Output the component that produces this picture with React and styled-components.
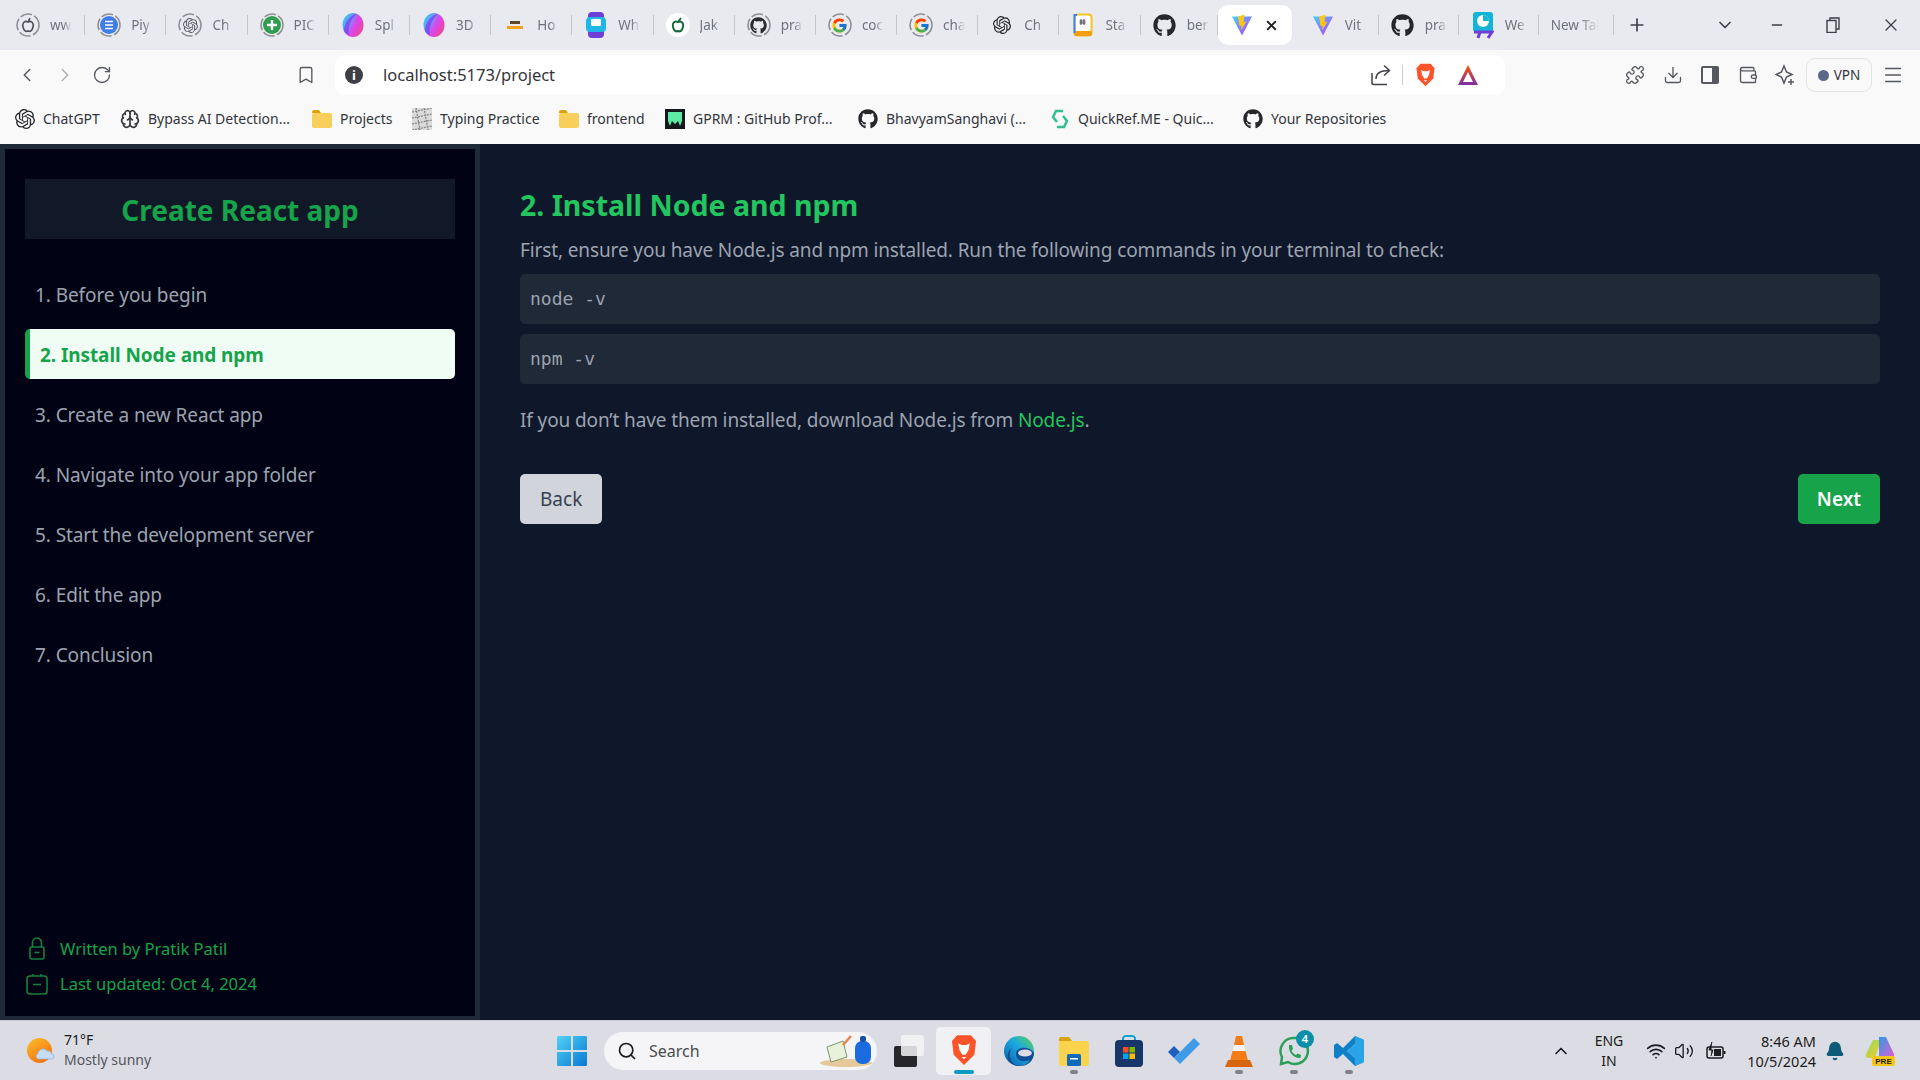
import React from 'react';
import styled, {createGlobalStyle} from 'styled-components';
import {
    ChevronLeft, ChevronRight, ChevronDown, ChevronUp, RotateCw, Bookmark, Puzzle, Download,
    Wallet, Menu, Minus, X, Plus, Search, Wifi, Volume2, Bell, Brain
} from 'lucide-react';
import {FaGithub} from 'react-icons/fa';
import {FcGoogle} from 'react-icons/fc';
import {SiOpenai} from 'react-icons/si';

const UI = '"Noto Sans", "Open Sans", sans-serif';

const Global = createGlobalStyle`
    html, body {
        margin: 0;
        height: 1080px;
        overflow: hidden;
        font-family: ${UI};
    }
    * { box-sizing: border-box; }
`

const Screen = styled.div`
    width: 1920px;
    height: 1080px;
    display: flex;
    flex-direction: column;
    background: #0f172a;
`

/* browser chrome */
const TabStrip = styled.div`
    height: 50px;
    background: #e9eaef;
    display: flex;
    align-items: center;
    padding-left: 4px;
`

const Tab = styled.div`
    width: ${props => props.$w || 81.2}px;
    margin-right: ${props => props.$active ? '7px' : '0'};
    flex: none;
    height: 40px;
    display: flex;
    align-items: center;
    gap: 10px;
    padding-left: 12px;
    position: relative;
    font-size: 13.5px;
    color: #70737b;
    overflow: hidden;
    background: ${props => props.$active ? '#fff' : 'transparent'};
    border-radius: ${props => props.$active ? '10px' : '0'};
    &::after {
        content: '';
        position: absolute;
        right: 0;
        top: 10px;
        bottom: 10px;
        width: 1px;
        background: ${props => props.$active ? 'transparent' : '#c4c6cc'};
    }
`

const TabName = styled.span`
    width: 22px;
    overflow: hidden;
    white-space: nowrap;
    -webkit-mask-image: linear-gradient(to right, #000 60%, transparent);
    mask-image: linear-gradient(to right, #000 60%, transparent);
`

const NewTabName = styled(TabName)`
    width: 48px;
`

const TabIcon = styled.span`
    width: 24px;
    height: 24px;
    flex: none;
    display: flex;
    align-items: center;
    justify-content: center;
    position: relative;
`

const Ring = styled.svg`
    position: absolute;
    inset: 0;
`

const StripTools = styled.div`
    flex: 1;
    display: flex;
    align-items: center;
    color: #3c3f46;
`

const PlusSlot = styled.div`
    margin-left: 13px;
    display: flex;
`

const WindowControls = styled.div`
    margin-left: auto;
    display: flex;
    align-items: center;
    gap: 41px;
    padding-right: 19px;
`

const ChevronSlot = styled.div`
    margin-right: -7px;
    display: flex;
`

const Restore = styled.svg`
    display: block;
`

const Toolbar = styled.div`
    height: 50px;
    background: #f9f9fa;
    display: flex;
    align-items: center;
    color: #55585f;
`

const NavTools = styled.div`
    width: 335px;
    flex: none;
    display: flex;
    align-items: center;
    padding-left: 16px;
    gap: 16px;
`

const BookmarkSlot = styled.div`
    margin-left: 168px;
    display: flex;
`

const UrlBar = styled.div`
    width: 1170px;
    flex: none;
    height: 40px;
    background: #fff;
    border-radius: 10px;
    display: flex;
    align-items: center;
    padding: 0 26px 0 10px;
`

const InfoDot = styled.span`
    width: 18px;
    height: 18px;
    border-radius: 50%;
    background: #3d3f44;
    color: #fff;
    font-size: 13px;
    font-weight: 700;
    display: flex;
    align-items: center;
    justify-content: center;
    line-height: 1;
`

const Url = styled.span`
    margin-left: 20px;
    margin-top: -2px;
    font-size: 16.5px;
    color: #33353a;
`

const UrlTools = styled.div`
    margin-left: auto;
    display: flex;
    align-items: center;
`

const ThinRule = styled.span`
    width: 1px;
    height: 20px;
    background: #c9cbd0;
    margin: 0 12px 0 10px;
`

const BatSlot = styled.span`
    margin-left: 21px;
    display: flex;
`

const ExtTools = styled.div`
    flex: 1;
    display: flex;
    align-items: center;
    padding-left: 120px;
    gap: 17.6px;
`

const VpnPill = styled.div`
    width: 66px;
    height: 34px;
    margin: 0 -8px 0 -7px;
    flex: none;
    border: 1px solid #e3e4e8;
    border-radius: 9px;
    display: flex;
    align-items: center;
    justify-content: center;
    gap: 5px;
    font-size: 13.5px;
    color: #33353a;
`

const VpnDot = styled.span`
    width: 11px;
    height: 11px;
    border-radius: 50%;
    background: #5b6788;
`

const Bookmarks = styled.div`
    height: 44px;
    background: #f9f9fa;
    display: flex;
    align-items: center;
    padding: 0 0 7px 15px;
`

const Mark = styled.div`
    width: ${props => props.$w}px;
    display: flex;
    align-items: center;
    gap: 8px;
    font-size: 14px;
    color: #33353a;
    white-space: nowrap;
`

/* page */
const Page = styled.div`
    flex: 1;
    display: flex;
    min-height: 0;
`

const Sidebar = styled.aside`
    width: 480px;
    border: 5px solid #1f2937;
    border-bottom-width: 4px;
    background: #010314;
    padding: 30px 20px 20px;
    display: flex;
    flex-direction: column;
`

const SideTitle = styled.h1`
    margin: 0 0 30px;
    height: 60px;
    background: #111827;
    color: #16a34a;
    font-size: 28px;
    font-weight: 700;
    line-height: 62px;
    text-align: center;
`

const NavList = styled.nav`
    display: flex;
    flex-direction: column;
    gap: 10px;
`

const NavItem = styled.div`
    height: 50px;
    display: flex;
    align-items: center;
    padding: 2px 0 0 10px;
    font-size: 19px;
    letter-spacing: -0.08px;
    border-radius: 5px;
    font-weight: ${props => props.$active ? 700 : 400};
    color: ${props => props.$active ? '#16a34a' : '#9ca3af'};
    background: ${props => props.$active ? '#f0fdf4' : 'transparent'};
    border-left: ${props => props.$active ? '5px solid #16a34a' : '0'};
`

const SideFooter = styled.div`
    margin-top: auto;
    display: flex;
    flex-direction: column;
    gap: 10px;
`

const FooterLine = styled.div`
    height: 25px;
    display: flex;
    align-items: center;
    gap: 11px;
    font-size: 16.5px;
    color: #16a34a;
`

const FooterIcon = styled.span`
    width: 24px;
    display: flex;
    justify-content: center;
`

const Content = styled.main`
    flex: 1;
    padding: 40px 40px 0;
    background: #0f172a;
`

const Heading = styled.h2`
    margin: 0;
    height: 42px;
    font-size: 28.5px;
    line-height: 42px;
    font-weight: 700;
    color: #22c55e;
`

const Text = styled.p`
    margin: 0;
    font-size: 19px;
    letter-spacing: -0.12px;
    line-height: 30px;
    color: #9ca3af;
`

const Lead = styled(Text)`
    margin: 9px 0 9px;
`

const Outro = styled(Text)`
    margin: 21px 0 39px;
`

const Link = styled.a`
    color: #22c55e;
`

const Code = styled.pre`
    margin: 0 0 10px;
    height: 50px;
    padding: 0 10px;
    background: #1f2937;
    border-radius: 5px;
    font-family: "DejaVu Sans Mono", "Liberation Mono", monospace;
    font-size: 18px;
    line-height: 50px;
    color: #9ca3af;
`

const Buttons = styled.div`
    display: flex;
    justify-content: space-between;
`

const Button = styled.button`
    height: 50px;
    padding: 0 ${props => props.$primary ? '19px' : '20px'};
    border: 0;
    border-radius: 5px;
    font-family: ${UI};
    font-size: 19px;
    font-weight: ${props => props.$primary ? 600 : 400};
    background: ${props => props.$primary ? '#16a34a' : '#d1d5db'};
    color: ${props => props.$primary ? '#fff' : '#374151'};
`

/* taskbar */
const Taskbar = styled.footer`
    height: 60px;
    background: #dcdce4;
    border-top: 1px solid #c9cad2;
    display: flex;
    align-items: center;
`

const Weather = styled.div`
    width: 557px;
    flex: none;
    display: flex;
    align-items: center;
    padding-left: 27px;
    gap: 9px;
`

const WeatherText = styled.div`
    font-size: 14px;
    line-height: 20px;
    margin-top: -2px;
    color: #55565c;
`

const Temp = styled.div`
    color: #1b1b1f;
`

const SearchBox = styled.div`
    width: 273px;
    height: 38px;
    flex: none;
    margin-left: 17px;
    border-radius: 19px;
    background: #f5f5f8;
    display: flex;
    align-items: center;
    padding: 0 4px 0 13px;
    gap: 12px;
    font-size: 16px;
    color: #4a4b50;
`

const SearchArt = styled.span`
    margin-left: auto;
    display: flex;
`

const TaskApps = styled.div`
    display: flex;
    align-items: center;
    flex: none;
    margin-left: 4px;
`

const AppSlot = styled.div`
    width: 55px;
    height: 48px;
    display: flex;
    align-items: center;
    justify-content: center;
    position: relative;
    border-radius: 5px;
    background: ${props => props.$active ? '#f0f0f5' : 'transparent'};
    &::after {
        content: '';
        position: absolute;
        bottom: 1px;
        left: 50%;
        transform: translateX(-50%);
        height: 4px;
        border-radius: 2px;
        width: ${props => props.$active ? '20px' : '8px'};
        background: ${props => props.$active ? '#0b9ac0' : props.$running ? '#80828a' : 'transparent'};
    }
`

const Badge = styled.span`
    position: absolute;
    top: 3px;
    right: 7px;
    width: 18px;
    height: 18px;
    border-radius: 50%;
    background: #0b8fa8;
    color: #fff;
    font-size: 11px;
    font-weight: 600;
    line-height: 18px;
    text-align: center;
`

const Tray = styled.div`
    flex: 1;
    display: flex;
    align-items: center;
    color: #1c1c20;
    font-size: 14px;
`

const TrayUp = styled.div`
    margin-left: 175px;
    display: flex;
`

const Lang = styled.div`
    width: 44px;
    margin-left: 16px;
    text-align: center;
    line-height: 20px;
`

const TrayIcons = styled.div`
    margin-left: 15px;
    display: flex;
    align-items: center;
    gap: 8px;
`

const BatteryBox = styled.span`
    margin-left: 4px;
    display: flex;
`

const Clock = styled.div`
    width: 90px;
    text-align: right;
    line-height: 20px;
    font-size: 14.5px;
`

const BellSlot = styled.div`
    margin-left: 9px;
    display: flex;
    color: #0e5b78;
`

const CopilotSlot = styled.div`
    margin-left: 20px;
    display: flex;
`

/* drawings */
function Dashed() {
    return (
        <Ring width="24" height="24" viewBox="0 0 24 24">
            <circle cx="12" cy="12" r="11" fill="none" stroke="#8e9096" strokeWidth="1.6" strokeDasharray="12 2.5"/>
        </Ring>
    )
}

function Vite({size = 24}) {
    return (
        <svg width={size} height={size} viewBox="0 0 24 24">
            <defs>
                <linearGradient id="viteBody" x1="0" y1="0" x2="1" y2="1">
                    <stop offset="0" stopColor="#41d1ff"/>
                    <stop offset="1" stopColor="#bd34fe"/>
                </linearGradient>
            </defs>
            <path d="M2 3.5 L22 3.5 L12 22.5 Z" fill="url(#viteBody)"/>
            <path d="M14.5 1.5 L8 3.8 L9.5 13 L11.5 12.5 L11 17.5 L16.5 8.5 L13.5 9 Z" fill="#ffc517"/>
        </svg>
    )
}

function Brave({size = 24}) {
    return (
        <svg width={size} height={size * 1.15} viewBox="0 0 24 28">
            <path d="M6 1 H18 L22.5 6 L21 18 L12 27 L3 18 L1.5 6 Z" fill="#fb542b"/>
            <path d="M7 8 L10 9.5 H14 L17 8 L16 14 L13.5 18 H10.5 L8 14 Z" fill="#fff"/>
            <path d="M10 20 H14 L12 22 Z" fill="#fff"/>
        </svg>
    )
}

function Bat() {
    return (
        <svg width="22" height="22" viewBox="0 0 22 22">
            <defs>
                <linearGradient id="batGrad" x1="0" y1="0" x2="0" y2="1">
                    <stop offset="0" stopColor="#ff5500"/>
                    <stop offset="1" stopColor="#7b2fa8"/>
                </linearGradient>
            </defs>
            <path d="M11 1 L21 21 H1 Z M11 8 L6 18 H16 Z" fill="url(#batGrad)" fillRule="evenodd"/>
        </svg>
    )
}

function ShareArrow() {
    return (
        <svg width="22" height="22" viewBox="0 0 22 22" fill="none" stroke="#3f4146" strokeWidth="1.5">
            <path d="M2 9 V19 C2 20 3 20.500 4 20.500 H17"/>
            <path d="M6 15 C6 9 10 6.500 19 6.500"/>
            <path d="M14 1.500 L19.500 6.500 L14 11.500"/>
        </svg>
    )
}

function Spline({id}) {
    return (
        <svg width="24" height="28" viewBox="0 0 24 28">
            <defs>
                <linearGradient id={id} x1="0" y1="0" x2="1" y2="0.6">
                    <stop offset="0" stopColor="#22d3ee"/>
                    <stop offset="0.35" stopColor="#60a5fa"/>
                    <stop offset="0.65" stopColor="#d946ef"/>
                    <stop offset="1" stopColor="#ec4899"/>
                </linearGradient>
            </defs>
            <ellipse cx="12" cy="14" rx="10.5" ry="12" fill={`url(#${id})`}/>
            <path d="M3 20 C3 10 10 4 16 3 C9 9 7 15 8 24 C6 24 4 22 3 20 Z" fill="#7c3aed" opacity="0.7"/>
        </svg>
    )
}

function Favicon({kind}) {
    switch (kind) {
        case 'jaki':
            return <TabIcon><Dashed/><svg width="14" height="16" viewBox="0 0 14 16"><path d="M7 5 C3 3 1 7 2 10 C3 14 5 15 7 14 C9 15 11 14 12 10 C13 7 11 3 7 5 Z M7 5 L9 1" fill="none" stroke="#4b4e55" strokeWidth="1.6"/></svg></TabIcon>
        case 'doc':
            return <TabIcon><Dashed/><svg width="18" height="18" viewBox="0 0 18 18"><circle cx="9" cy="9" r="9" fill="#3f7de8"/><path d="M5 5.5 H13 M5 9 H13 M5 12.5 H13" stroke="#fff" strokeWidth="1.7"/></svg></TabIcon>
        case 'gpt':
            return <TabIcon><Dashed/><SiOpenai size={15} color="#55585f"/></TabIcon>
        case 'gptw':
            return <TabIcon><SiOpenai size={18} color="#26272b"/></TabIcon>
        case 'plus':
            return <TabIcon><Dashed/><svg width="18" height="18" viewBox="0 0 18 18"><circle cx="9" cy="9" r="9" fill="#2e9e4f"/><path d="M9 4 V14 M4 9 H14" stroke="#fff" strokeWidth="2.4"/></svg></TabIcon>
        case 'spline':
            return <TabIcon><Spline id="splineA"/></TabIcon>
        case 'spline2':
            return <TabIcon><Spline id="splineB"/></TabIcon>
        case 'apna':
            return <TabIcon><svg width="18" height="14" viewBox="0 0 18 14"><rect x="4" y="3" width="10" height="3" fill="#5a4a2a"/><rect x="1" y="8" width="16" height="3" fill="#f0a41c"/></svg></TabIcon>
        case 'watch':
            return <TabIcon><svg width="22" height="28" viewBox="0 0 22 28"><rect x="3" y="1" width="16" height="26" rx="4" fill="#6d3fd6"/><rect x="1" y="6" width="20" height="15" rx="4" fill="#1fb6e8"/><rect x="6" y="8" width="10" height="7" rx="1" fill="#fff"/></svg></TabIcon>
        case 'leaf':
            return <TabIcon><svg width="24" height="24" viewBox="0 0 24 24"><circle cx="12" cy="12" r="12" fill="#fff"/><path d="M12 9 C8 7 6 11 7 14 C8 18 10 19 12 18 C14 19 16 18 17 14 C18 11 16 7 12 9 Z M12 9 L15 5" fill="none" stroke="#14683a" strokeWidth="2"/></svg></TabIcon>
        case 'ghring':
            return <TabIcon><Dashed/><FaGithub size={17} color="#2b2c30"/></TabIcon>
        case 'gh':
            return <TabIcon><FaGithub size={23} color="#26272b"/></TabIcon>
        case 'google':
            return <TabIcon><Dashed/><FcGoogle size={17}/></TabIcon>
        case 'stack':
            return <TabIcon><svg width="20" height="24" viewBox="0 0 20 24"><rect x="1.5" y="1.5" width="17" height="21" rx="3" fill="#fff" stroke="#f5c518" strokeWidth="2"/><rect x="1" y="18" width="18" height="5" rx="2" fill="#f59e0b"/><path d="M4 2 H1.5 V20" fill="none" stroke="#3b82f6" strokeWidth="2"/><path d="M8 6 V12 M11 6 V12 M6.5 8 H12.5 M6.5 10 H12.5" stroke="#444" strokeWidth="1"/></svg></TabIcon>
        case 'vite':
            return <TabIcon><Vite/></TabIcon>
        case 'pres':
            return <TabIcon><svg width="22" height="28" viewBox="0 0 22 28"><rect x="1" y="1" width="20" height="20" rx="3" fill="#12b5d6"/><circle cx="11" cy="10" r="6" fill="#fff"/><path d="M11 10 V4 A6 6 0 0 1 17 10 Z" fill="#12b5d6"/><path d="M2 21 H20 L16 27 M6 27 L8 21" fill="none" stroke="#6d3fd6" strokeWidth="3"/></svg></TabIcon>
        default:
            return null;
    }
}

function LockIcon() {
    return (
        <svg width="16" height="23" viewBox="0 0 16 23" fill="none" stroke="#15803d" strokeWidth="1.6">
            <path d="M3.5 10 V5.5 A4.5 4.5 0 0 1 12.500 5.500 V10"/>
            <rect x="1" y="10" width="14" height="12" rx="2"/>
            <path d="M5.500 15.500 H10.500"/>
        </svg>
    )
}

function CalendarIcon() {
    return (
        <svg width="22" height="22" viewBox="0 0 22 22" fill="none" stroke="#15803d" strokeWidth="1.6">
            <rect x="1" y="3" width="20" height="18" rx="3"/>
            <path d="M7 1 V3 M15 1 V3 M7 11.500 H15"/>
        </svg>
    )
}

function SidePanel() {
    return (
        <svg width="20" height="20" viewBox="0 0 20 20">
            <rect x="2" y="2" width="16" height="16" rx="1" fill="none" stroke="#55585f" strokeWidth="2"/>
            <rect x="12" y="2" width="6" height="16" fill="#55585f"/>
        </svg>
    )
}

function StarPlus() {
    return (
        <svg width="20" height="22" viewBox="0 0 20 22" fill="none" stroke="#55585f" strokeWidth="1.5">
            <path d="M9 2 L11.500 8 L17 10.500 L11.500 13 L9 19 L6.500 13 L1 10.500 L6.500 8 Z"/>
            <path d="M16 15 V21 M13 18 H19"/>
        </svg>
    )
}

function WinLogo() {
    return (
        <svg width="30" height="30" viewBox="0 0 30 30">
            <defs>
                <linearGradient id="winGrad" x1="0" y1="0" x2="1" y2="1">
                    <stop offset="0" stopColor="#4fd2f5"/>
                    <stop offset="1" stopColor="#0a78d4"/>
                </linearGradient>
            </defs>
            <path d="M0 1.5 A1.500 1.500 0 0 1 1.500 0 H14 V14 H0 Z M16 0 H28.500 A1.500 1.500 0 0 1 30 1.500 V14 H16 Z M0 16 H14 V30 H1.500 A1.500 1.500 0 0 1 0 28.500 Z M16 16 H30 V28.500 A1.500 1.500 0 0 1 28.500 30 H16 Z" fill="url(#winGrad)"/>
        </svg>
    )
}

function SearchPicture() {
    return (
        <svg width="54" height="32" viewBox="0 0 54 32">
            <ellipse cx="27" cy="28" rx="26" ry="4" fill="#e6c99a"/>
            <path d="M8 12 L24 6 L28 22 L12 27 Z" fill="#e9f0dc" stroke="#7b9a6a"/>
            <path d="M24 10 L32 1" stroke="#e8864a" strokeWidth="2.500"/>
            <rect x="36" y="6" width="16" height="23" rx="7" fill="#1a6be0"/>
            <rect x="41" y="1" width="6" height="6" rx="2" fill="#1a4fa8"/>
        </svg>
    )
}

function TaskView() {
    return (
        <svg width="30" height="32" viewBox="0 0 30 32">
            <rect x="0" y="11" width="23" height="21" rx="2" fill="#27272b"/>
            <rect x="7" y="0" width="23" height="21" rx="2" fill="#f4f4f6" fillOpacity="0.85"/>
        </svg>
    )
}

function Edge() {
    return (
        <svg width="30" height="30" viewBox="0 0 30 30">
            <defs>
                <linearGradient id="edgeGrad" x1="0" y1="1" x2="1" y2="0">
                    <stop offset="0" stopColor="#0c59a4"/>
                    <stop offset="0.55" stopColor="#1ba7e0"/>
                    <stop offset="1" stopColor="#5fd35a"/>
                </linearGradient>
            </defs>
            <circle cx="15" cy="15" r="15" fill="url(#edgeGrad)"/>
            <path d="M30 17 C26 10 12 10 12 18 C12 25 20 27 26 24 C22 31 12 31 8 26 C4 20 6 14 8 12 C4 14 3 20 4 24 C8 30 14 30 17 30 C24 30 30 24 30 17 Z" fill="#0c4f96"/>
            <ellipse cx="21" cy="17" rx="7" ry="3.500" fill="#dcdce4"/>
        </svg>
    )
}

function Folder() {
    return (
        <svg width="30" height="30" viewBox="0 0 30 30">
            <path d="M0 3 A2 2 0 0 1 2 1 H10 L13 5 H0 Z" fill="#d9a20f"/>
            <rect x="0" y="5" width="30" height="25" rx="2" fill="#fcd34d"/>
            <rect x="8" y="18" width="14" height="12" rx="1.500" fill="#0f6cbd"/>
            <rect x="11" y="22" width="8" height="1.500" fill="#fff"/>
        </svg>
    )
}

function Store() {
    return (
        <svg width="30" height="32" viewBox="0 0 30 32">
            <path d="M9 6 V3 A3 3 0 0 1 12 1 H18 A3 3 0 0 1 21 3 V6" fill="none" stroke="#12a0d8" strokeWidth="2"/>
            <rect x="1" y="5" width="28" height="27" rx="4" fill="#17376b"/>
            <rect x="9" y="12" width="5.500" height="5.500" fill="#f25022"/>
            <rect x="15.500" y="12" width="5.500" height="5.500" fill="#7fba00"/>
            <rect x="9" y="18.500" width="5.500" height="5.500" fill="#00a4ef"/>
            <rect x="15.500" y="18.500" width="5.500" height="5.500" fill="#ffb900"/>
        </svg>
    )
}

function Todo() {
    return (
        <svg width="32" height="26" viewBox="0 0 32 26">
            <path d="M0 14 L6 8 L12 14 L6 20 Z" fill="#1e5fc0"/>
            <path d="M6 20 L12 26 L32 6 L26 0 L12 14 Z" fill="#3f9be8"/>
        </svg>
    )
}

function Vlc() {
    return (
        <svg width="28" height="32" viewBox="0 0 28 32">
            <path d="M11 1 H17 L19 10 H9 Z" fill="#f47b16"/>
            <path d="M9 10 H19 L20.500 16 H7.500 Z" fill="#f3f3f3"/>
            <path d="M7.500 16 H20.500 L23 26 H5 Z" fill="#f47b16"/>
            <path d="M3 25 H25 L28 32 H0 Z" fill="#d8660e"/>
        </svg>
    )
}

function Whatsapp() {
    return (
        <svg width="32" height="32" viewBox="0 0 32 32">
            <path d="M16 3 A13 13 0 0 0 4 22 L3 29 L10 27 A13 13 0 1 0 16 3 Z" fill="none" stroke="#2aa05a" strokeWidth="2.500"/>
            <path d="M11 10 L14 10 L15 14 L13.500 15.500 C14.500 18 16 19 18 20 L19.500 18.500 L23 20 L22.500 23 C17 24 10 18 11 10 Z" fill="#2aa05a"/>
        </svg>
    )
}

function VsCode() {
    return (
        <svg width="30" height="30" viewBox="0 0 30 30">
            <path d="M21 0 L30 4 V26 L21 30 L9 18 L3 23 L0 21 V9 L3 7 L9 12 Z M21 8 L13 15 L21 22 Z" fill="#0f7fc7" fillRule="evenodd"/>
            <path d="M21 0 L30 4 V26 L21 30 Z M21 8 V22 L13 15 Z" fill="#2aa3e8" fillRule="evenodd"/>
        </svg>
    )
}

function SunCloud() {
    return (
        <svg width="28" height="26" viewBox="0 0 28 26">
            <defs>
                <linearGradient id="sunGrad" x1="0" y1="0" x2="0.6" y2="1">
                    <stop offset="0" stopColor="#f9bf2d"/>
                    <stop offset="1" stopColor="#f7730f"/>
                </linearGradient>
            </defs>
            <circle cx="12.500" cy="12.500" r="12.500" fill="url(#sunGrad)"/>
            <path d="M11 21 A3 3 0 0 1 11 15.500 A5 5 0 0 1 20 13 A4 4 0 0 1 24.500 16 A2.500 2.500 0 0 1 25 21 Z" fill="#c6dcf5" stroke="#8fb4e0" strokeWidth="0.700"/>
        </svg>
    )
}

function Battery() {
    return (
        <svg width="20" height="20" viewBox="0 0 20 20" fill="none" stroke="#1c1c20" strokeWidth="1.500">
            <rect x="1" y="6" width="16" height="11" rx="2"/>
            <rect x="8" y="8" width="7" height="7" fill="#1c1c20" stroke="none"/>
            <path d="M18.500 10 V13" strokeWidth="2"/>
            <path d="M6 1 L3 9 H7 L5 15" fill="#1c1c20" strokeWidth="1"/>
        </svg>
    )
}

function Copilot() {
    return (
        <svg width="30" height="30" viewBox="0 0 30 30">
            <defs>
                <linearGradient id="copLeft" x1="0" y1="0" x2="1" y2="1">
                    <stop offset="0" stopColor="#8ee05a"/>
                    <stop offset="1" stopColor="#f7c72c"/>
                </linearGradient>
                <linearGradient id="copRight" x1="0" y1="0" x2="1" y2="1">
                    <stop offset="0" stopColor="#2f9ce8"/>
                    <stop offset="1" stopColor="#e45bd0"/>
                </linearGradient>
            </defs>
            <path d="M8 4 H16 L10 22 H3 A3 3 0 0 1 1 18 Z" fill="url(#copLeft)"/>
            <path d="M14 1 H21 L29 18 A3 3 0 0 1 26 22 H14 Z" fill="url(#copRight)"/>
            <rect x="7" y="20" width="23" height="10" rx="2.500" fill="#f5c518"/>
            <text x="18.500" y="28" fontSize="8" fontWeight="700" textAnchor="middle" fill="#222" fontFamily="Liberation Sans, sans-serif">PRE</text>
        </svg>
    )
}

function FolderMark() {
    return (
        <svg width="20" height="18" viewBox="0 0 20 18">
            <path d="M0 2 A2 2 0 0 1 2 0 H7 L9 3 H0 Z" fill="#d9a20f"/>
            <rect x="0" y="3" width="20" height="15" rx="2" fill="#f7cf5a"/>
        </svg>
    )
}

function TypingMark() {
    return (
        <svg width="20" height="22" viewBox="0 0 20 22">
            <rect x="0" y="0" width="20" height="22" fill="#dadada"/>
            <path d="M0 4 L20 0 M0 10 L20 6 M0 16 L20 12 M0 22 L20 18 M4 0 L8 22 M12 0 L16 22" stroke="#858585" strokeWidth="1.200" strokeDasharray="2 1"/>
        </svg>
    )
}

function GprmMark() {
    return (
        <svg width="20" height="20" viewBox="0 0 20 20">
            <rect width="20" height="20" fill="#15181c"/>
            <path d="M3 3 H17 V12 L15 17 L13 12 L10 15 L7 12 L5 17 L3 12 Z" fill="#5ee9a6"/>
        </svg>
    )
}

function QuickMark() {
    return (
        <svg width="20" height="20" viewBox="0 0 20 20" fill="none" stroke="#2fbf91" strokeWidth="2.500">
            <path d="M13 2 H6 L3 8 L7 13"/>
            <path d="M7 18 H14 L17 12 L13 7"/>
        </svg>
    )
}

const tabs = [
    ['jaki', 'ww'], ['doc', 'Piy'], ['gpt', 'Ch'], ['plus', 'PIC'], ['spline', 'Spl'], ['spline2', '3D'],
    ['apna', 'Ho'], ['watch', 'Wh'], ['leaf', 'Jak'], ['ghring', 'pra'], ['google', 'coc'], ['google', 'cha'],
    ['gptw', 'Ch'], ['stack', 'Sta'], ['gh', 'ber'],
];

const laterTabs = [['vite', 'Vit'], ['gh', 'pra'], ['pres', 'We']];

const steps = [
    '1. Before you begin', '2. Install Node and npm', '3. Create a new React app',
    '4. Navigate into your app folder', '5. Start the development server', '6. Edit the app', '7. Conclusion',
];

export default function App() {
    return (
        <Screen>
            <Global/>
            <TabStrip>
                {tabs.map(([kind, name], i) => (
                    <Tab key={i} $w={i === 14 ? 77 : undefined}><Favicon kind={kind}/><TabName>{name}</TabName></Tab>
                ))}
                <Tab $active $w={74}><Favicon kind="vite"/><X size={15} color="#222" strokeWidth={3}/></Tab>
                {laterTabs.map(([kind, name], i) => (
                    <Tab key={i} $w={80}><Favicon kind={kind}/><TabName>{name}</TabName></Tab>
                ))}
                <Tab $w={75}><NewTabName>New Tab</NewTabName></Tab>
                <StripTools>
                    <PlusSlot><Plus size={20}/></PlusSlot>
                    <WindowControls>
                        <ChevronSlot><ChevronDown size={20}/></ChevronSlot>
                        <Minus size={16}/>
                        <Restore width="14" height="16" viewBox="0 0 14 16" fill="none" stroke="#3c3f46" strokeWidth="1.4">
                            <rect x="1" y="3.500" width="9" height="12"/>
                            <path d="M4 3 V1 H13 V12 H10"/>
                        </Restore>
                        <X size={20} strokeWidth={1.5}/>
                    </WindowControls>
                </StripTools>
            </TabStrip>
            <Toolbar>
                <NavTools>
                    <ChevronLeft size={22} strokeWidth={1.6}/>
                    <ChevronRight size={22} strokeWidth={1.6} color="#aeb0b5"/>
                    <RotateCw size={20} strokeWidth={1.6}/>
                    <BookmarkSlot><Bookmark size={20} strokeWidth={1.6}/></BookmarkSlot>
                </NavTools>
                <UrlBar>
                    <InfoDot>i</InfoDot>
                    <Url>localhost:5173/project</Url>
                    <UrlTools>
                        <ShareArrow/>
                        <ThinRule/>
                        <Brave size={21}/>
                        <BatSlot><Bat/></BatSlot>
                    </UrlTools>
                </UrlBar>
                <ExtTools>
                    <Puzzle size={20} strokeWidth={1.6}/>
                    <Download size={20} strokeWidth={1.6}/>
                    <SidePanel/>
                    <Wallet size={20} strokeWidth={1.6}/>
                    <StarPlus/>
                    <VpnPill><VpnDot/>VPN</VpnPill>
                    <Menu size={22} strokeWidth={1.6}/>
                </ExtTools>
            </Toolbar>
            <Bookmarks>
                <Mark $w={105}><SiOpenai size={20} color="#26272b"/>ChatGPT</Mark>
                <Mark $w={192}><Brain size={20} color="#3a3b40"/>Bypass AI Detection...</Mark>
                <Mark $w={100}><FolderMark/>Projects</Mark>
                <Mark $w={147}><TypingMark/>Typing Practice</Mark>
                <Mark $w={106}><FolderMark/>frontend</Mark>
                <Mark $w={193}><GprmMark/>GPRM : GitHub Prof...</Mark>
                <Mark $w={192}><FaGithub size={20} color="#26272b"/>BhavyamSanghavi (...</Mark>
                <Mark $w={193}><QuickMark/>QuickRef.ME - Quic...</Mark>
                <Mark $w={150}><FaGithub size={20} color="#26272b"/>Your Repositories</Mark>
            </Bookmarks>
            <Page>
                <Sidebar>
                    <SideTitle>Create React app</SideTitle>
                    <NavList>
                        {steps.map((step, i) => (
                            <NavItem key={step} $active={i === 1}>{step}</NavItem>
                        ))}
                    </NavList>
                    <SideFooter>
                        <FooterLine><FooterIcon><LockIcon/></FooterIcon>Written by Pratik Patil</FooterLine>
                        <FooterLine><FooterIcon><CalendarIcon/></FooterIcon>Last updated: Oct 4, 2024</FooterLine>
                    </SideFooter>
                </Sidebar>
                <Content>
                    <Heading>2. Install Node and npm</Heading>
                    <Lead>First, ensure you have Node.js and npm installed. Run the following commands in your terminal to check:</Lead>
                    <Code>node -v</Code>
                    <Code>npm -v</Code>
                    <Outro>If you don’t have them installed, download Node.js from <Link>Node.js</Link>.</Outro>
                    <Buttons>
                        <Button>Back</Button>
                        <Button $primary>Next</Button>
                    </Buttons>
                </Content>
            </Page>
            <Taskbar>
                <Weather>
                    <SunCloud/>
                    <WeatherText><Temp>71°F</Temp>Mostly sunny</WeatherText>
                </Weather>
                <WinLogo/>
                <SearchBox>
                    <Search size={20} color="#1c1c20"/>
                    Search
                    <SearchArt><SearchPicture/></SearchArt>
                </SearchBox>
                <TaskApps>
                    <AppSlot><TaskView/></AppSlot>
                    <AppSlot $active><Brave size={28}/></AppSlot>
                    <AppSlot><Edge/></AppSlot>
                    <AppSlot $running><Folder/></AppSlot>
                    <AppSlot><Store/></AppSlot>
                    <AppSlot><Todo/></AppSlot>
                    <AppSlot $running><Vlc/></AppSlot>
                    <AppSlot $running><Whatsapp/><Badge>4</Badge></AppSlot>
                    <AppSlot $running><VsCode/></AppSlot>
                </TaskApps>
                <Tray>
                    <TrayUp><ChevronUp size={20}/></TrayUp>
                    <Lang>ENG<br/>IN</Lang>
                    <TrayIcons>
                        <Wifi size={20}/>
                        <Volume2 size={20} strokeWidth={1.6}/>
                        <BatteryBox><Battery/></BatteryBox>
                    </TrayIcons>
                    <Clock>8:46 AM<br/>10/5/2024</Clock>
                    <BellSlot><Bell size={20} fill="#0e5b78"/></BellSlot>
                    <CopilotSlot><Copilot/></CopilotSlot>
                </Tray>
            </Taskbar>
        </Screen>
    );
}
